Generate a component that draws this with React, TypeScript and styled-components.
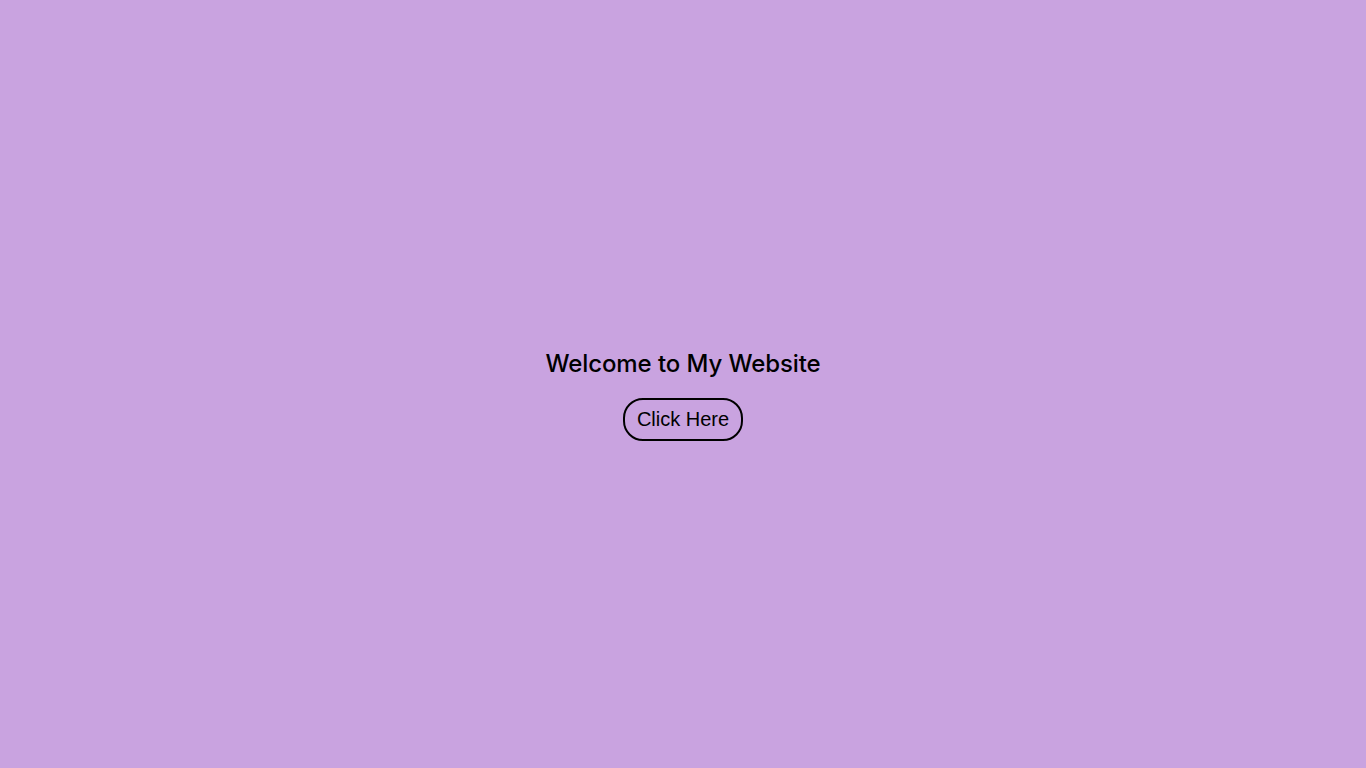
import styled, { createGlobalStyle } from 'styled-components';

const GlobalStyle = createGlobalStyle`
  html {
    overflow-y: scroll;
  }

  body {
    margin: 8px;
    background-color: #c9a3e0;
    font-family: Inter, "Liberation Sans", Arial, sans-serif;
    color: #000;
  }
`;

const App = () => {
  return (
    <>
      <GlobalStyle />
      <Hero>
        <Title>Welcome to My Website</Title>
        <ActionButton type="button">Click Here</ActionButton>
      </Hero>
      <Below />
    </>
  );
};

const Hero = styled.section`
  box-sizing: border-box;
  height: 100vh;
  padding-top: 5px;
  display: flex;
  flex-direction: column;
  align-items: center;
  justify-content: center;
  gap: 20px;
`;

const Title = styled.h1`
  margin: 0;
  font-size: 24px;
  font-weight: 500;
  line-height: 29px;
  letter-spacing: -0.1px;
`;

const ActionButton = styled.button`
  font-family: "Liberation Sans", Arial, sans-serif;
  font-size: 20px;
  color: #000;
  background: transparent;
  border: 2px solid #000;
  border-radius: 20px;
  padding: 8px 12px;
  cursor: pointer;
`;

const Below = styled.div`
  height: 1600px;
`;

export default App;
